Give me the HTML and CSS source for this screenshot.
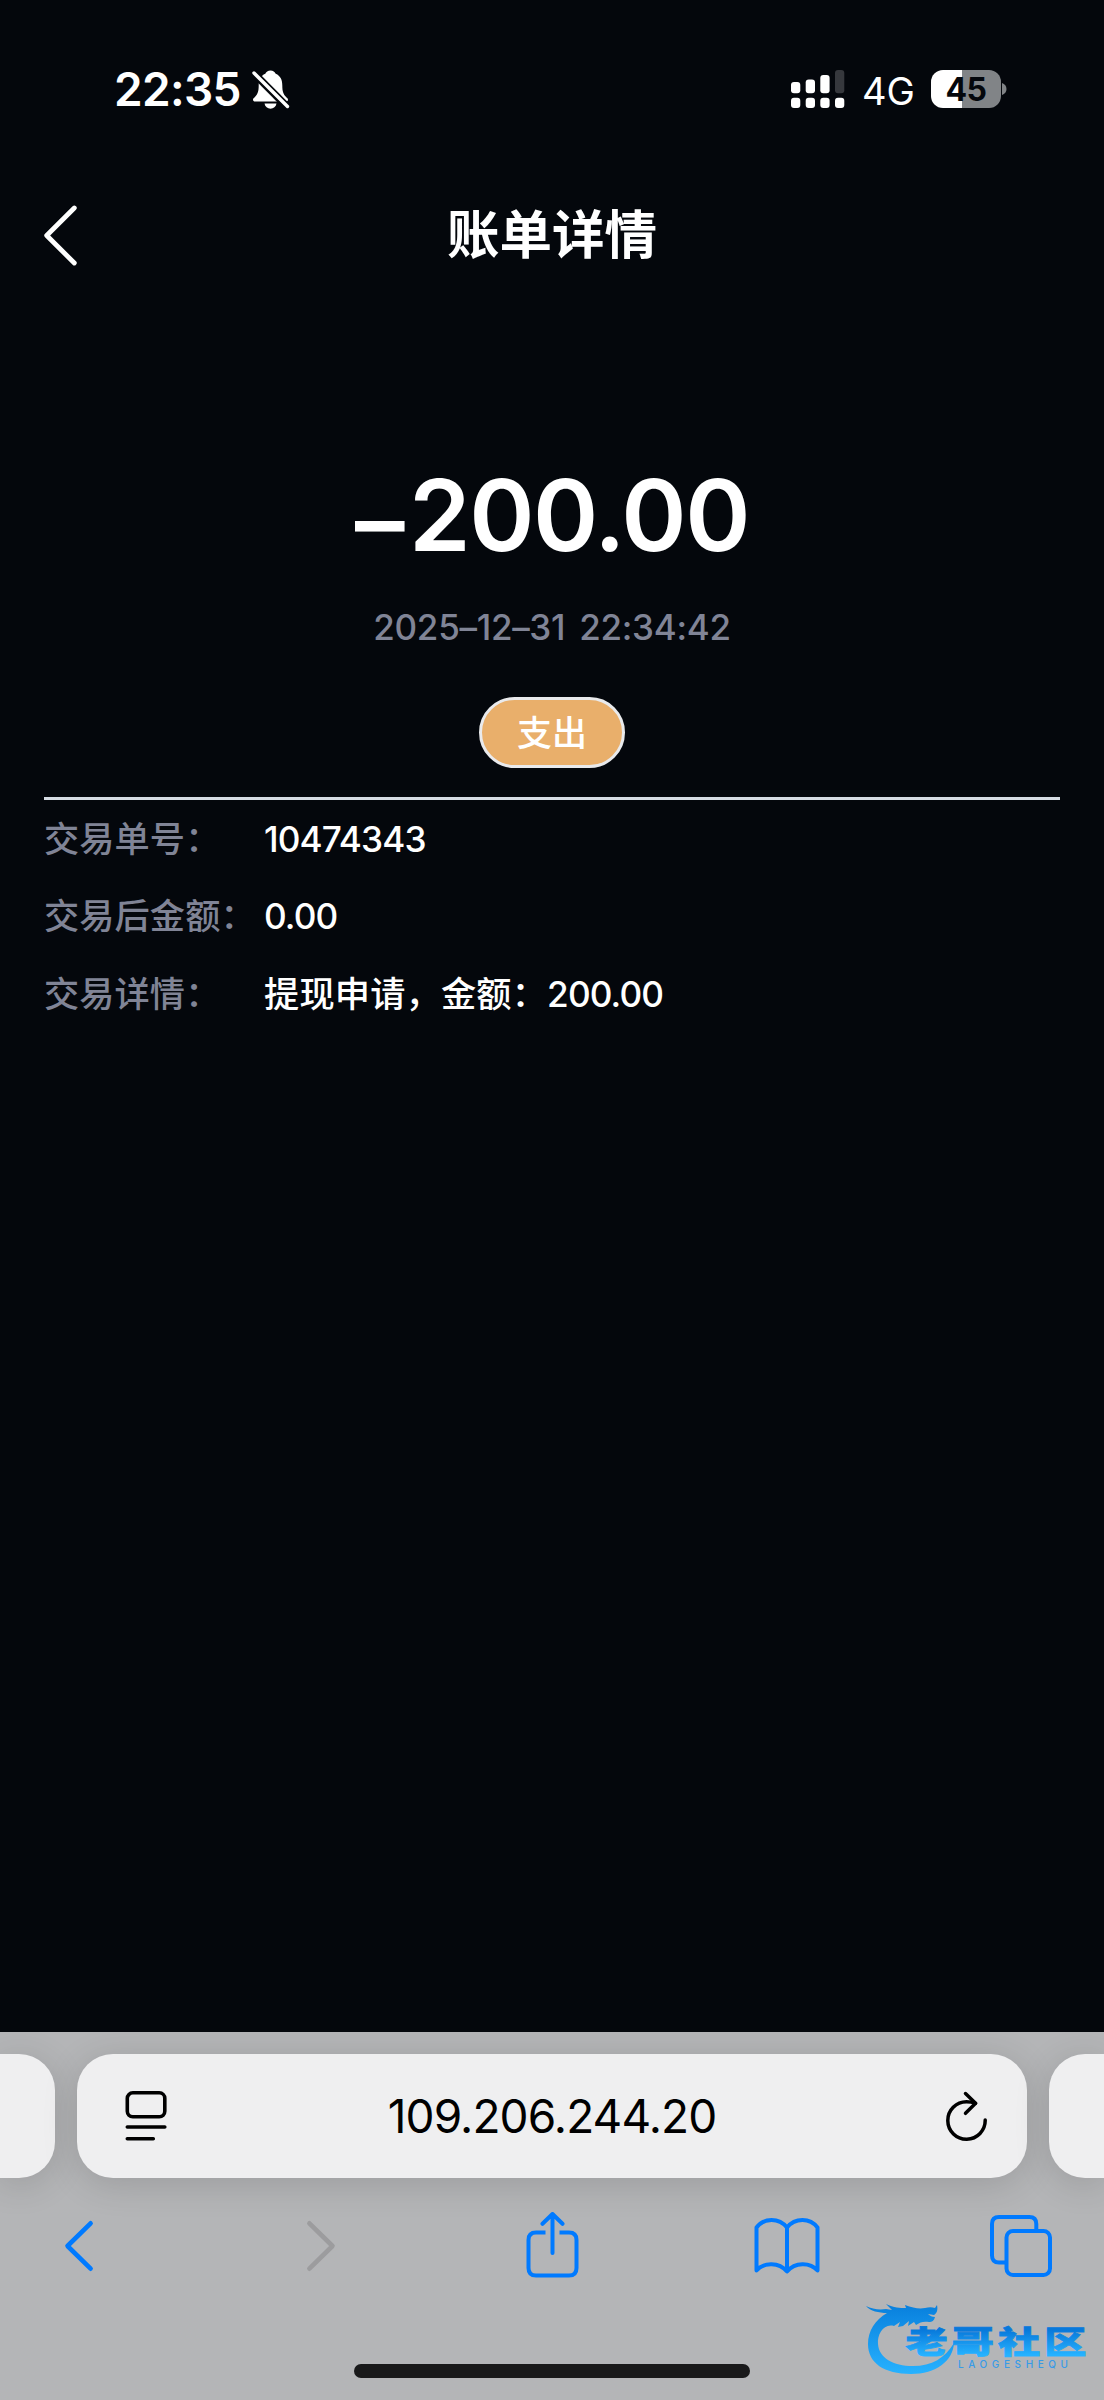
FILE: index.html
```html
<!DOCTYPE html>
<html lang="zh-CN">
<head>
<meta charset="utf-8">
<title>账单详情</title>
<link rel="stylesheet" href="styles.css">
</head>
<body>
<div class="screen">
  <header class="status">
    <div class="status-left">
      <span class="clock">22:35</span>
      <svg class="bell" width="38" height="42" viewBox="0 0 38 42">
        <path d="M18.500 1.500c-2.600 0-4.400 1.400-5.200 3.300C8.500 6.800 6.700 11 6.700 16.500c0 6-1 8.500-3.600 11.200-1.300 1.300-2.100 2-2.100 3 0 1.200.9 1.800 2.200 1.800h30.600c1.300 0 2.200-.6 2.200-1.800 0-1-.8-1.700-2.100-3-2.600-2.700-3.600-5.200-3.600-11.200 0-5.500-1.800-9.700-6.600-11.700-.8-1.900-2.600-3.300-5.200-3.300z" fill="#fff"/>
        <path d="M12.500 34.500h12c-.6 3.400-3 5.200-6 5.200s-5.400-1.800-6-5.200z" fill="#fff"/>
        <path d="M1.500 4 36 38.500" stroke="#04070c" stroke-width="7.500"/>
        <path d="M2 4 35.500 37.500" stroke="#fff" stroke-width="3.400" stroke-linecap="round"/>
      </svg>
    </div>
    <div class="status-right">
      <svg class="signal" width="54" height="38" viewBox="0 0 54 38" fill="#fff">
        <rect x="0" y="12" width="9.300" height="11.300" rx="3"/>
        <rect x="14.700" y="9.500" width="9.300" height="13.800" rx="3"/>
        <rect x="29.300" y="5" width="9.300" height="18.300" rx="3"/>
        <rect x="44" y="0" width="9.300" height="23.300" rx="3" fill="#36383d"/>
        <rect x="0" y="27.700" width="9.300" height="10.300" rx="3"/>
        <rect x="14.700" y="27.700" width="9.300" height="10.300" rx="3"/>
        <rect x="29.300" y="27.700" width="9.300" height="10.300" rx="3"/>
        <rect x="44" y="27.700" width="9.300" height="10.300" rx="3"/>
      </svg>
      <span class="network">4G</span>
      <div class="battery"><span class="level">45</span></div>
      <svg class="nub" width="5" height="12" viewBox="0 0 5 12"><path d="M0 0c2.800 1 4.500 3.300 4.500 6S2.800 11 0 12z" fill="#818487"/></svg>
    </div>
  </header>

  <nav class="titlebar">
    <svg class="back" width="36" height="62" viewBox="0 0 36 62"><path d="M32.300 4 4.700 31.500 32.300 59" fill="none" stroke="#fff" stroke-width="4.800" stroke-linecap="round" stroke-linejoin="round"/></svg>
    <h1 class="title">账单详情</h1>
  </nav>

  <main class="bill">
    <div class="amount"><span class="sign">–</span>200.00</div>
    <div class="date">2025–12–31 22:34:42</div>
    <div class="badge">支出</div>
    <dl class="rows">
      <div class="row"><dt>交易单号：</dt><dd>10474343</dd></div>
      <div class="row"><dt>交易后金额：</dt><dd>0.00</dd></div>
      <div class="row"><dt>交易详情：</dt><dd><span class="note">提现申请，金额：</span>200.00</dd></div>
    </dl>
  </main>

  <footer class="browser">
    <div class="tabs">
      <div class="tab side-left"></div>
      <div class="tab address">
        <svg width="42" height="50" viewBox="0 0 42 50" fill="none" stroke="#000" stroke-width="3.600" stroke-linecap="round"><rect x="2.300" y="1.800" width="37.500" height="24" rx="5.500"/><path d="M2.300 36h37.500M2.300 47.800h26"/></svg>
        <span class="url">109.206.244.20</span>
        <svg width="42" height="50" viewBox="0 0 42 50" fill="none" stroke="#000" stroke-width="3.500" stroke-linecap="round" stroke-linejoin="round"><path d="M39.200 29a18.700 18.700 0 1 1-18.700-18.200c3 0 6 .5 9 1.500"/><path d="M19.500 2.500 29.600 12.300 19.500 22.300"/></svg>
      </div>
      <div class="tab side-right"></div>
    </div>
    <div class="tools">
      <svg width="30" height="52" viewBox="0 0 30 52" class="tool chevron"><path d="M26.600 3.300 3.500 26l23.100 22.700"/></svg>
      <svg width="30" height="52" viewBox="0 0 30 52" class="tool chevron off"><path d="M3.400 3.300 26.500 26 3.400 48.700"/></svg>
      <svg width="54" height="68" viewBox="0 0 54 68" class="tool"><path d="M19.500 20.500h-9.500q-7.500 0-7.500 7.500v28q0 7.500 7.500 7.500h33q7.500 0 7.500-7.500V28q0-7.500-7.500-7.500H33.500" stroke-linecap="butt"/><path d="M26.500 41V2.500M16.500 11.800 26.500 2 36.500 11.800"/></svg>
      <svg width="66" height="58" viewBox="0 0 66 58" class="tool"><path d="M33 10.500C25 .5 10 .5 2.500 10.500v43C10 45 25 45 33 54.500c8-9.500 23-9.500 30.500-1v-43C56 .5 41 .5 33 10.500zV54"/></svg>
      <svg width="62" height="62" viewBox="0 0 62 62" class="tool"><rect x="16.500" y="16" width="43.500" height="44" rx="6.500"/><path d="M46.300 15V9q0-7-7-7H9Q2 2 2 9v31.500q0 7 7 7h6.500"/></svg>
    </div>
    <div class="home"></div>
    <svg class="logo" width="230" height="80" viewBox="0 0 230 80">
      <defs>
        <linearGradient id="ring" x1="0" y1="0" x2="0" y2="1"><stop offset="0" stop-color="#087fdc"/><stop offset="1" stop-color="#27b2ff"/></linearGradient>
        <linearGradient id="word" x1="0" y1="0" x2="0" y2="1"><stop offset=".3" stop-color="#0879db"/><stop offset=".85" stop-color="#26b2ff"/></linearGradient>
      </defs>
      <path fill="url(#ring)" transform="translate(0 2)" d="M2 6c6 3 13 4 20 3l6 1-6-6c8 4 14 4 20 4l-1-3c8 3 14 4 20 3 4-1 7-1 10 0l2-3c1 5 0 8-3 10l-6-1c2 2 4 3 7 3-1 4-3 5-6 5-5-1-9 0-13 3l-2-3-6 4 1-5-6 5-5 1 2-5-6 4C20 23 13 34 14 44c1 14 15 22 35 22 19 0 32-8 41-23-1 18-18 31-43 31C20 74 4 63 4 44 4 31 11 20 23 13 15 13 6 11 2 6z"/>
      <text class="logo-name" fill="url(#word)" stroke="url(#word)" transform="translate(41.500 54.500) scale(1.360 1)" textLength="133">老哥社区</text>
      <text class="logo-latin" x="94" y="70" textLength="110">LAOGESHEQU</text>
    </svg>
  </footer>
</div>
</body>
</html>
```
FILE: styles.css
```css
* { box-sizing: border-box; }
body { margin: 0; background: #04070c; }
.screen {
  width: 1104px;
  height: 2400px;
  display: flex;
  flex-direction: column;
  overflow: hidden;
  background: #04070c;
  color: #fff;
  font-family: Inter, "Noto Sans CJK SC", sans-serif;
}
svg { display: block; flex: none; }

.status {
  height: 178px;
  padding: 0 97px 0 114px;
  display: flex;
  align-items: center;
  justify-content: space-between;
}
.status-left, .status-right { display: flex; align-items: center; }
.clock { width: 138px; font-size: 46px; font-weight: 600; line-height: 56px; letter-spacing: -.7px; white-space: nowrap; }
.bell { margin-top: 2px; }
.network { width: 86px; padding: 3px 0 0 17px; font-size: 38px; line-height: 48px; }
.battery {
  width: 70px;
  height: 38px;
  border-radius: 12px;
  background: linear-gradient(90deg, #fff 31.500px, #818487 31.500px);
  display: flex;
  align-items: center;
  justify-content: center;
}
.level { padding-top: 2px; color: #04070c; font-size: 32px; font-weight: 700; line-height: 38px; letter-spacing: -.5px; }
.nub { margin-left: 1px; }

.titlebar {
  height: 114px;
  padding: 0 42px;
  display: grid;
  grid-template-columns: 36px 1fr 36px;
  align-items: center;
}
.title { margin: 0; text-align: center; font-size: 52.500px; font-weight: 600; line-height: 80px; }

.bill {
  flex: 1;
  padding: 163px 44px 0;
  display: flex;
  flex-direction: column;
  align-items: center;
  font-feature-settings: "calt" 0;
}
.amount { font-size: 99px; font-weight: 600; line-height: 120px; letter-spacing: -1.500px; white-space: nowrap; }
.sign { margin-right: 6px; line-height: 0; vertical-align: -5px; }
.date { margin-top: 32px; font-size: 35px; font-weight: 500; line-height: 40px; letter-spacing: -.3px; word-spacing: 5px; color: #808496; white-space: nowrap; }
.badge {
  margin-top: 50px;
  width: 146px;
  height: 71px;
  border: 3px solid #e9eaec;
  border-radius: 36px;
  background: #e9af6b;
  font-size: 35px;
  font-weight: 500;
  line-height: 67px;
  text-align: center;
}
.rows { width: 100%; margin: 29px 0 0; border-top: 3px solid #d5dce4; }
.row { display: flex; height: 77.300px; font-size: 35.200px; font-weight: 500; line-height: 78px; white-space: nowrap; }
.row dt { width: 220px; color: #808496; letter-spacing: .1px; }
.row dd { margin: 0; letter-spacing: -.9px; }
.note { letter-spacing: .2px; }

.browser {
  height: 368px;
  padding-top: 22px;
  display: flex;
  flex-direction: column;
  position: relative;
  background: #b4b5b7;
  overflow: hidden;
}
.tabs { display: grid; grid-template-columns: 55px 950px 55px; column-gap: 22px; height: 124px; }
.tab { background: #efeff0; border-radius: 36px; box-shadow: 0 6px 36px rgba(0, 0, 0, .14); }
.side-left { border-radius: 0 36px 36px 0; }
.side-right { border-radius: 36px 0 0 36px; }
.address { display: flex; align-items: center; justify-content: space-between; padding: 0 39px 0 48px; color: #000; }
.url { margin-right: 9px; font-size: 46px; line-height: 60px; letter-spacing: -.9px; white-space: nowrap; }
.tools {
  height: 136px;
  padding: 0 52px 0 64px;
  display: grid;
  grid-template-columns: 242px 219.500px 228.500px 236px 62px;
  align-items: center;
}
.tool { fill: none; stroke: #007aff; stroke-width: 4px; stroke-linecap: round; stroke-linejoin: round; }
.chevron { stroke-width: 4.600px; }
.off { stroke: #9c9c9e; }
.home { width: 396px; height: 14px; margin: 50px auto 0; border-radius: 7px; background: #19191a; }
.logo { position: absolute; left: 864px; top: 266px; }
.logo-name { font: 900 31px "Noto Sans CJK SC", sans-serif; stroke-width: .8px; }
.logo-latin { font: 500 10px Inter, sans-serif; fill: #379be8; }
```
